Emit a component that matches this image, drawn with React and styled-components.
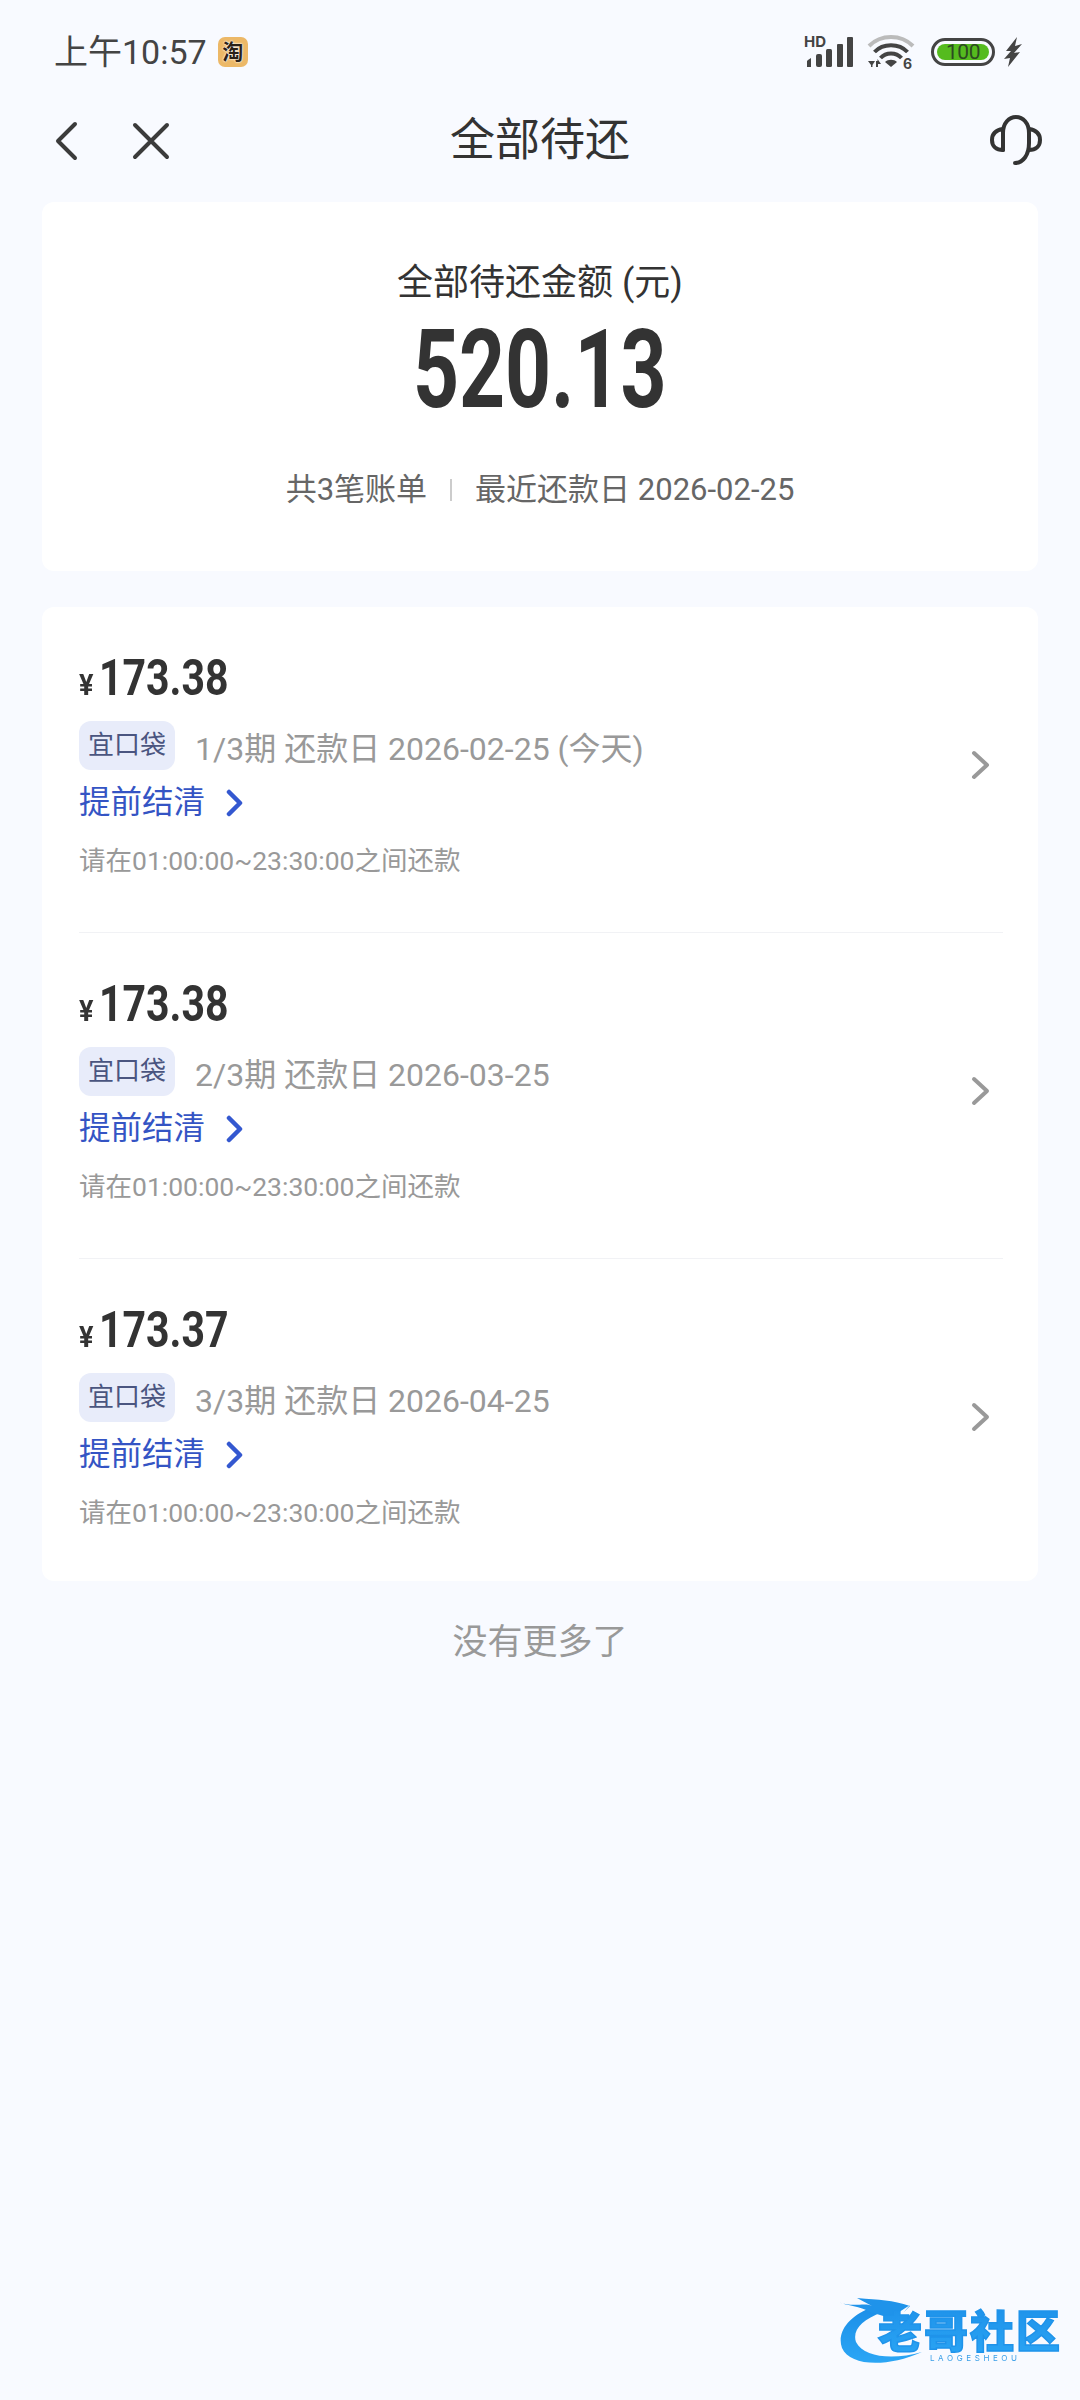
import React from "react";
import styled, { createGlobalStyle } from "styled-components";

const GlobalStyle = createGlobalStyle`
  html, body { margin: 0; padding: 0; background: #f8faff; }
  body { font-family: Roboto, "Noto Sans CJK SC", sans-serif; }
  * { box-sizing: border-box; }
`;

const Page = styled.div`
  position: relative;
  width: 1080px;
  height: 2400px;
  background: #f8faff;
  overflow: hidden;
`;

const StatusBar = styled.div`
  height: 104px;
  padding: 0 58px 0 54px;
  display: flex;
  align-items: center;
  justify-content: space-between;
`;

const StatusLeft = styled.div`
  display: flex;
  align-items: center;
  gap: 11px;
`;

const Clock = styled.span`
  font-size: 34px;
  line-height: 40px;
  color: #444;
`;

const AppBadge = styled.span`
  width: 30px;
  height: 30px;
  border-radius: 7px;
  background: #ecb867;
  color: #2a2118;
  font-size: 21px;
  font-weight: 700;
  line-height: 30px;
  text-align: center;
  text-shadow: 0 0 2px #fff, 0 0 2px #fff;
`;

const StatusRight = styled.div`
  display: flex;
  align-items: center;
`;

const BatteryShell = styled.div`
  width: 64px;
  height: 28px;
  margin: 0 9px 0 16px;
  border: 3px solid #444;
  border-radius: 14px;
  padding: 3px;
  display: flex;
`;

const BatteryFill = styled.div`
  flex: 1;
  border-radius: 9px;
  background: #55bb1e;
  color: #2c4a22;
  font-size: 21px;
  line-height: 16px;
  text-align: center;
  letter-spacing: -0.5px;
`;

const NavBar = styled.div`
  height: 74px;
  margin-bottom: 24px;
  padding: 0 38px 0 54px;
  display: flex;
  align-items: center;
  justify-content: space-between;
  position: relative;
`;

const NavLeft = styled.div`
  display: flex;
  align-items: center;
  gap: 54px;
`;

const NavTitle = styled.h1`
  position: absolute;
  left: 0;
  right: 0;
  margin: 0;
  text-align: center;
  font-size: 45px;
  font-weight: 400;
  line-height: 60px;
  color: #333;
  pointer-events: none;
`;

const Card = styled.section`
  margin: 0 42px;
  background: #fff;
  border-radius: 12px;
`;

const Hero = styled(Card)`
  height: 369px;
  margin-bottom: 36px;
  padding-top: 56px;
  display: flex;
  flex-direction: column;
  align-items: center;
`;

const HeroLabel = styled.div`
  font-size: 36px;
  line-height: 50px;
  color: #333;
`;

const HeroAmount = styled.div`
  margin-top: 7px;
  font-size: 110px;
  font-weight: 700;
  line-height: 110px;
  color: #333;
  transform: scaleX(0.73);
`;

const Summary = styled.div`
  margin-top: 43px;
  display: flex;
  align-items: center;
  font-size: 31px;
  line-height: 44px;
  color: #666;
`;

const SummaryRule = styled.span`
  width: 2px;
  height: 22px;
  margin: 0 23px;
  background: #ccc;
`;

const Row = styled.div`
  margin: 0 35px 0 37px;
  padding: 41px 0 51px;
  display: flex;
  align-items: center;
  justify-content: space-between;
  border-bottom: 1px solid #f1f2f5;

  &:last-child {
    padding-bottom: 48px;
    border-bottom: 0;
  }
`;

const RowBody = styled.div`
  display: flex;
  flex-direction: column;
  align-items: flex-start;
`;

const Amount = styled.div`
  display: flex;
  align-items: baseline;
  height: 60px;
  line-height: 60px;
  font-weight: 700;
  color: #333;
`;

const Currency = styled.span`
  font-size: 30px;
  width: 20px;
  display: inline-block;
  transform: scaleX(0.9);
  transform-origin: left;
`;

const AmountDigits = styled.span`
  font-size: 50px;
  display: inline-block;
  transform: scaleX(0.82);
  transform-origin: left;
`;

const Meta = styled.div`
  margin-top: 13px;
  display: flex;
  align-items: center;
  gap: 20px;
  font-size: 32px;
  color: #999;
`;

const Tag = styled.span`
  width: 96px;
  height: 49px;
  border-radius: 12px;
  background: #e8ecfa;
  color: #4a5580;
  font-size: 26px;
  line-height: 49px;
  text-align: center;
`;

const SettleLink = styled.div`
  margin-top: 9px;
  display: flex;
  align-items: center;
  gap: 20px;
  font-size: 31.5px;
  line-height: 48px;
  color: #3454c4;
`;

const Hint = styled.div`
  margin-top: 14px;
  font-size: 26.5px;
  line-height: 40px;
  color: #999;
`;

const RowArrow = styled.div`
  margin-right: 12px;
  display: flex;
`;

const Footer = styled.div`
  margin-top: 32px;
  font-size: 35px;
  line-height: 60px;
  text-align: center;
  color: #999;
`;

const Watermark = styled.svg`
  position: absolute;
  right: 0;
  bottom: 0;
  filter: blur(0.6px);
`;

const SignalIcon = () => (
  <svg width="50" height="36" viewBox="0 0 50 36">
    <text x="0" y="13" fontFamily="Inter, sans-serif" fontSize="15" fontWeight="700" fill="#444">HD</text>
    <path d="M4 26 L7 24 V33 H3 V27 Z" fill="#444" />
    <rect x="12" y="20" width="6" height="13" rx="2" fill="#444" />
    <rect x="22" y="15" width="6" height="18" rx="1.5" fill="#444" />
    <rect x="33" y="10" width="6" height="23" rx="1" fill="#444" />
    <rect x="43" y="3" width="6" height="30" rx="1" fill="#444" />
  </svg>
);

const WifiIcon = () => (
  <svg width="48" height="36" viewBox="0 0 48 36" style={{ marginLeft: 13 }}>
    <path d="M2 12 C14 0 34 0 46 12" fill="none" stroke="#bbb" strokeWidth="4" />
    <path d="M7.500 18 C16 9 32 9 40.500 18" fill="none" stroke="#444" strokeWidth="4" />
    <path d="M13.500 24 C19 18 29 18 34.500 24" fill="none" stroke="#444" strokeWidth="4" />
    <path d="M18 28 C21 25 27 25 30 28 L24 33 Z" fill="#444" />
    <path d="M1 27 H8 L5.500 31 V33 H4 V31 Z M9 33 V27 H10.500 V25 L14 30 H11 V33 Z" fill="#444" />
    <text x="36" y="35" fontFamily="Inter, sans-serif" fontSize="14" fontWeight="700" fill="#444">6</text>
  </svg>
);

const BoltIcon = () => (
  <svg width="18" height="30" viewBox="0 0 18 30">
    <path d="M13 0 L2 14 L7 14 L0 22 L6 21 L4 30 L16 15 L10 16 L18 7 L11 9 Z" fill="#444" />
  </svg>
);

const BackIcon = () => (
  <svg width="24" height="40" viewBox="0 0 24 40">
    <path d="M21 3 L4 20 L21 37" fill="none" stroke="#3b3b3b" strokeWidth="4" strokeLinecap="round" strokeLinejoin="round" />
  </svg>
);

const CloseIcon = () => (
  <svg width="38" height="38" viewBox="0 0 38 38">
    <path d="M3 3 L35 35 M35 3 L3 35" fill="none" stroke="#3b3b3b" strokeWidth="4" strokeLinecap="round" />
  </svg>
);

const HeadsetIcon = () => (
  <svg width="52" height="52" viewBox="0 0 52 52">
    <path d="M13 35 V18 C13 8 19 2 26 2 C33 2 39 8 39 18 V28 C39 40 33 48 25 48" fill="none" stroke="#333" strokeWidth="4" strokeLinecap="round" />
    <path d="M13 14 C6 15 2 19 2 25 C2 31 6 35 13 35 Z" fill="none" stroke="#333" strokeWidth="4" strokeLinejoin="round" />
    <path d="M39 14 C46 15 50 19 50 25 C50 31 46 35 39 35" fill="none" stroke="#333" strokeWidth="4" strokeLinecap="round" />
  </svg>
);

const LinkChevron = () => (
  <svg width="20" height="28" viewBox="0 0 20 28">
    <path d="M4 3 L15 14 L4 25" fill="none" stroke="#3458d0" strokeWidth="4.500" strokeLinecap="round" strokeLinejoin="round" />
  </svg>
);

const RowChevron = () => (
  <svg width="20" height="30" viewBox="0 0 20 30">
    <path d="M3 3 L16 15 L3 27" fill="none" stroke="#999" strokeWidth="4" strokeLinecap="round" strokeLinejoin="round" />
  </svg>
);

const bills = [
  { id: 1, amount: "173.38", term: "1/3期", date: "2026-02-25 (今天)" },
  { id: 2, amount: "173.38", term: "2/3期", date: "2026-03-25" },
  { id: 3, amount: "173.37", term: "3/3期", date: "2026-04-25" },
];

const CommunityMark = () => (
  <svg width="270" height="120" viewBox="0 0 270 120">
    <defs>
      <linearGradient id="markBlue" x1="0" y1="0" x2="0" y2="1">
        <stop offset="0" stopColor="#1c8fe8" />
        <stop offset="1" stopColor="#2ba6f5" />
      </linearGradient>
    </defs>
    <path d="M60 32 C36 42 27 58 32 72 C40 90 76 92 112 76 C84 84 54 82 46 66 C42 54 52 44 72 36 Z" fill="url(#markBlue)" />
    <path d="M28 26 C44 32 54 26 62 30 L47 22 C70 24 82 24 100 30 L94 36 L100 29 L80 42 L60 36 C50 30 38 30 28 26 Z" fill="#1f93ea" />
    <text x="68" y="72" fontFamily='"Noto Sans CJK SC", sans-serif' fontSize="44" fontWeight="900" letterSpacing="2" fill="url(#markBlue)" stroke="#1f93ea" strokeWidth="1.500">老哥社区</text>
    <text x="120" y="85" fontFamily="Inter, sans-serif" fontSize="8" letterSpacing="3.600" fill="#3a9fe8">LAOGESHEOU</text>
  </svg>
);

export default function App() {
  return (
    <Page>
      <GlobalStyle />
      <StatusBar>
        <StatusLeft>
          <Clock>上午10:57</Clock>
          <AppBadge>淘</AppBadge>
        </StatusLeft>
        <StatusRight>
          <SignalIcon />
          <WifiIcon />
          <BatteryShell>
            <BatteryFill>100</BatteryFill>
          </BatteryShell>
          <BoltIcon />
        </StatusRight>
      </StatusBar>

      <NavBar>
        <NavLeft>
          <BackIcon />
          <CloseIcon />
        </NavLeft>
        <NavTitle>全部待还</NavTitle>
        <HeadsetIcon />
      </NavBar>

      <Hero>
        <HeroLabel>全部待还金额 (元)</HeroLabel>
        <HeroAmount>520.13</HeroAmount>
        <Summary>
          共3笔账单
          <SummaryRule />
          最近还款日 2026-02-25
        </Summary>
      </Hero>

      <Card>
        {bills.map((bill) => (
          <Row key={bill.id}>
            <RowBody>
              <Amount>
                <Currency>¥</Currency>
                <AmountDigits>{bill.amount}</AmountDigits>
              </Amount>
              <Meta>
                <Tag>宜口袋</Tag>
                <span>{bill.term} 还款日 {bill.date}</span>
              </Meta>
              <SettleLink>
                提前结清
                <LinkChevron />
              </SettleLink>
              <Hint>请在01:00:00~23:30:00之间还款</Hint>
            </RowBody>
            <RowArrow>
              <RowChevron />
            </RowArrow>
          </Row>
        ))}
      </Card>

      <Footer>没有更多了</Footer>

      <Watermark as={CommunityMarkWrap} />
    </Page>
  );
}

function CommunityMarkWrap({ className }) {
  return (
    <span className={className} style={{ display: "block" }}>
      <CommunityMark />
    </span>
  );
}
